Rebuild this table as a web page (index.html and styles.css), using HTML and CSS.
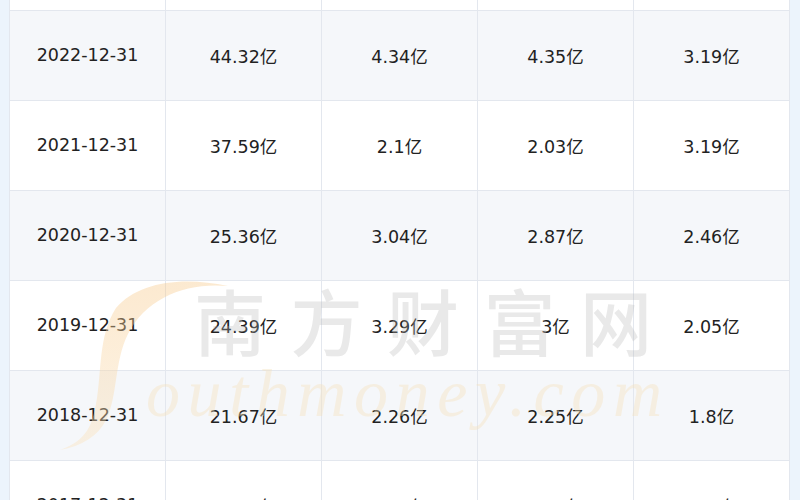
FILE: index.html
```html
<!DOCTYPE html>
<html lang="zh-CN">
<head>
<meta charset="utf-8">
<title>营收数据</title>
<link rel="stylesheet" href="styles.css">
</head>
<body>
<div class="page">
  <div class="table">
    <div class="row"><div class="cell"></div><div class="cell"></div><div class="cell"></div><div class="cell"></div><div class="cell"></div></div>
    <div class="row alt"><div class="cell">2022-12-31</div><div class="cell">44.32亿</div><div class="cell">4.34亿</div><div class="cell">4.35亿</div><div class="cell">3.19亿</div></div>
    <div class="row"><div class="cell">2021-12-31</div><div class="cell">37.59亿</div><div class="cell">2.1亿</div><div class="cell">2.03亿</div><div class="cell">3.19亿</div></div>
    <div class="row alt"><div class="cell">2020-12-31</div><div class="cell">25.36亿</div><div class="cell">3.04亿</div><div class="cell">2.87亿</div><div class="cell">2.46亿</div></div>
    <div class="row"><div class="cell">2019-12-31</div><div class="cell">24.39亿</div><div class="cell">3.29亿</div><div class="cell">3亿</div><div class="cell">2.05亿</div></div>
    <div class="row alt"><div class="cell">2018-12-31</div><div class="cell">21.67亿</div><div class="cell">2.26亿</div><div class="cell">2.25亿</div><div class="cell">1.8亿</div></div>
    <div class="row"><div class="cell">2017-12-31</div><div class="cell">19.57亿</div><div class="cell">1.81亿</div><div class="cell">1.63亿</div><div class="cell">1.85亿</div></div>
  </div>
  <svg class="watermark" width="800" height="500" viewBox="0 0 800 500" aria-hidden="true">
    <defs>
      <linearGradient id="swoosh" x1="0" y1="0" x2="0" y2="1">
        <stop offset="0" stop-color="#f7c98a"/>
        <stop offset="1" stop-color="#fbe3bd"/>
      </linearGradient>
    </defs>
    <path class="s-mark" d="M228 286 C186 282 146 298 128 334 C114 362 118 396 106 420 C98 436 82 446 60 450 C88 440 92 424 96 404 C102 370 98 336 116 308 C138 282 182 276 228 286 Z" fill="url(#swoosh)"/>
    <text class="wm-en" x="146" y="416" textLength="516" lengthAdjust="spacing">outhmoney.com</text>
    <text class="wm-cn" x="194" y="350" textLength="458" lengthAdjust="spacing">南方财富网</text>
  </svg>
</div>
</body>
</html>
```

FILE: styles.css
```css
html, body {
  margin: 0;
  padding: 0;
}

body {
  background: #ecf4fc;
  font-family: "DejaVu Sans", "Noto Sans CJK SC", sans-serif;
  color: #222222;
}

.page {
  position: relative;
  width: 800px;
  height: 500px;
  overflow: hidden;
}

.table {
  margin: -79px 0 0 9px;
  width: 781px;
  box-sizing: border-box;
  border-left: 1px solid #e3e7ee;
  background: #ffffff;
}

.row {
  display: grid;
  grid-template-columns: repeat(5, 156px);
  height: 90px;
  box-sizing: border-box;
  border-bottom: 1px solid #e3e7ee;
}

.row.alt {
  background: #f5f7fa;
}

.cell {
  display: flex;
  align-items: center;
  justify-content: center;
  padding-bottom: 1px;
  border-right: 1px solid #e3e7ee;
  font-size: 17.5px;
  white-space: nowrap;
}

.watermark {
  position: absolute;
  left: 0;
  top: 0;
  pointer-events: none;
}

.s-mark {
  opacity: 0.4;
}

.wm-en {
  font-family: "Liberation Serif", serif;
  font-style: italic;
  font-size: 68px;
  fill: #f5e2bc;
  opacity: 0.4;
}

.wm-cn {
  font-family: "Noto Sans CJK SC", sans-serif;
  font-weight: 500;
  font-size: 72px;
  fill: #b8b8b8;
  opacity: 0.3;
}
```
